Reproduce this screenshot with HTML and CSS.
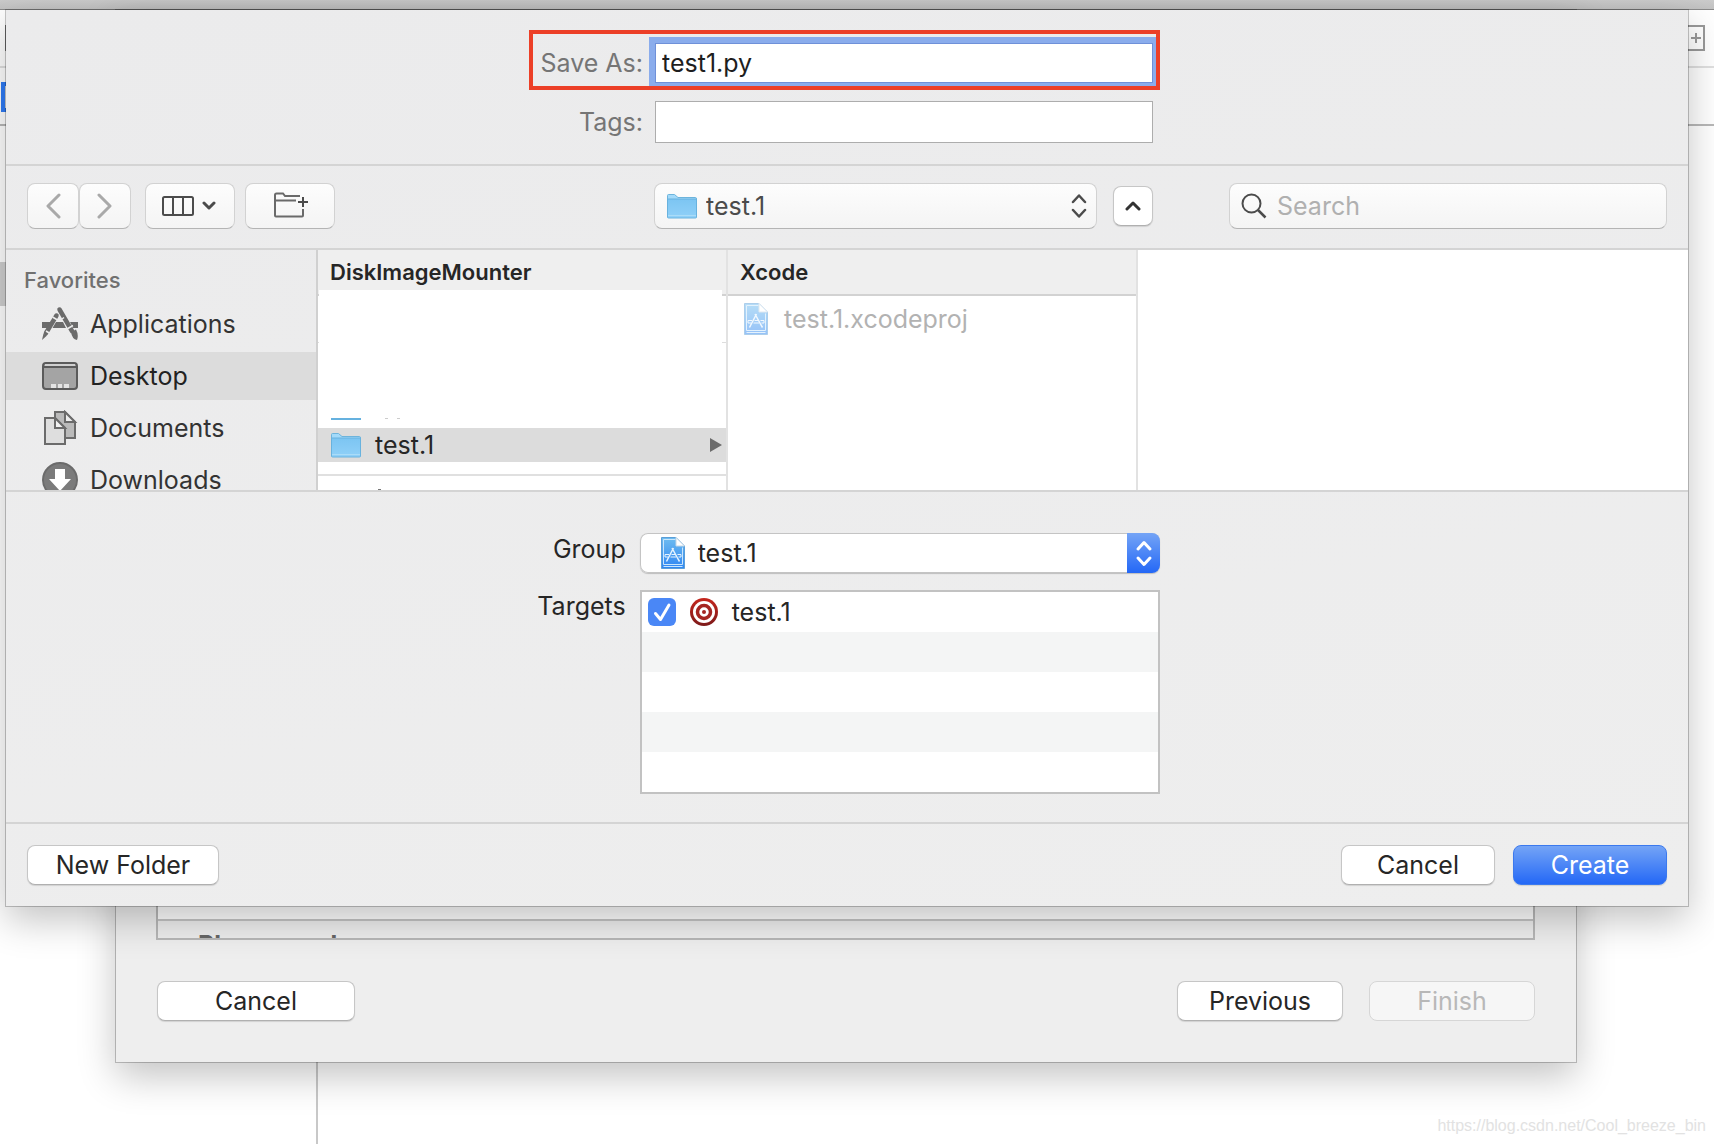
FILE: index.html
```html
<!DOCTYPE html>
<html lang="en">
<head>
<meta charset="utf-8">
<title>Save As</title>
<link rel="stylesheet" href="styles.css">
</head>
<body>
<svg class="defs" width="0" height="0" aria-hidden="true">
  <defs>
    <linearGradient id="folderFill" x1="0" y1="0" x2="0" y2="1"><stop offset="0" stop-color="#7cc5f2"/><stop offset="1" stop-color="#90d0f8"/></linearGradient>
    <linearGradient id="docFill" x1="0" y1="0" x2="0" y2="1"><stop offset="0" stop-color="#6fbdf0"/><stop offset="1" stop-color="#2f86f2"/></linearGradient>
    <linearGradient id="ringFill" x1="0" y1="0" x2="0" y2="1"><stop offset="0" stop-color="#c5261d"/><stop offset="1" stop-color="#7d1a1a"/></linearGradient>
    <symbol id="folder" viewBox="0 0 30 25">
      <path d="M.5 23V1.500Q.5.500 1.500.500H7.500L11 3.500H28.500Q29.500 3.500 29.500 5V23Z" fill="#a3dafa" stroke="#6db4dc"/>
      <path d="M.5 5H29.500V23Q29.500 24 28.500 24H1.500Q.5 24 .5 23Z" fill="url(#folderFill)" stroke="#68b2de"/>
      <path d="M1 21.500H29" stroke="#aadcf8"/>
    </symbol>
    <symbol id="project" viewBox="0 0 24 32">
      <path d="M.5.500H15L23.500 9V31.500H.5Z" fill="url(#docFill)" stroke="#5b9fd8"/>
      <path d="M2.500 2.500H14.500M2.500 2.500V27.500H21.500V10.500M2.500 29.500H21.500" fill="none" stroke="#c9e6fc"/>
      <path d="M15 .5V9H23.500Z" fill="#fff" stroke="#c4d6e4"/>
      <path d="M12.500 11 6.500 22.500 5.500 24.500M11 11 17 22 18.500 24.500" fill="none" stroke="#e4f3ff" stroke-width="1.500"/>
      <path d="M4 17.500H8M10.500 17.500H14M16.500 17.500H20V20H17.500M4 17.500V20H7M9.500 20H15" fill="none" stroke="#e4f3ff"/>
    </symbol>
  </defs>
</svg>

<div class="editor" aria-hidden="true">
  <div class="editor-title"></div>
  <div class="editor-tabs"><span class="split-edge"></span>
    <svg width="26" height="26" viewBox="0 0 26 26"><path d="M1 1H25V25H1ZM12 13H22M17 8V18" fill="none" stroke="#999" stroke-width="2"/></svg>
  </div>
  <div class="editor-path"><span class="file-chip"></span></div>
  <div class="editor-body"><div class="navigator"><div class="navigator-row"></div></div></div>
</div>

<section class="wizard" aria-label="New file">
  <div class="template-list"><div class="template-area"></div><div class="template-section">Playground</div></div>
  <div class="wizard-actions">
    <button class="btn btn-wide" type="button">Cancel</button>
    <button class="btn btn-prev" type="button">Previous</button>
    <button class="btn btn-prev" type="button" disabled>Finish</button>
  </div>
</section>

<form class="sheet" aria-label="Save">
  <div class="names">
    <div class="name-row highlighted"><label for="name">Save As:</label><input id="name" class="field focused" type="text" value="test1.py"></div>
    <div class="name-row"><label for="tags">Tags:</label><input id="tags" class="field" type="text"></div>
  </div>

  <div class="toolbar">
    <div class="tools">
      <button class="tool nav-btn" type="button" aria-label="Back"><svg width="16" height="26" viewBox="0 0 16 26"><path d="M14 2 3 13 14 24" fill="none" stroke="#a9a9a9" stroke-width="3" stroke-linecap="round" stroke-linejoin="round"/></svg></button>
      <button class="tool nav-btn" type="button" aria-label="Forward"><svg width="16" height="26" viewBox="0 0 16 26"><path d="M2 2 13 13 2 24" fill="none" stroke="#a9a9a9" stroke-width="3" stroke-linecap="round" stroke-linejoin="round"/></svg></button>
      <button class="tool view-btn" type="button" aria-label="View as columns">
        <svg width="32" height="20" viewBox="0 0 32 20"><rect x="1" y="1" width="30" height="18" rx="1.500" fill="none" stroke="#4b4b4b" stroke-width="2"/><path d="M11 1V19M21 1V19" stroke="#4b4b4b" stroke-width="2"/></svg>
        <svg width="14" height="10" viewBox="0 0 14 10"><path d="M2 2 7 7 12 2" fill="none" stroke="#4b4b4b" stroke-width="3" stroke-linecap="round" stroke-linejoin="round"/></svg>
      </button>
      <button class="tool group-btn" type="button" aria-label="New group"><svg width="36" height="28" viewBox="0 0 36 28"><path d="M28 5H13L11 2.500H4.500Q3 2.500 3 4V24.500Q3 25.500 4 25.500H30Q31 25.500 31 24.500V18M3 9.500H24" fill="none" stroke="#6a6a6a" stroke-width="2"/><path d="M31 6V16M26 11H36" stroke="#4b4b4b" stroke-width="2"/></svg></button>
    </div>
    <div class="place">
      <div class="popup tool">
        <svg class="popup-folder" width="30" height="25"><use href="#folder"/></svg>
        <select aria-label="Location"><option>test.1</option></select>
        <svg width="16" height="24" viewBox="0 0 16 24"><path d="M2 8 8 1.500 14 8M2 16 8 22.500 14 16" fill="none" stroke="#4b4b4b" stroke-width="2.500" stroke-linecap="round" stroke-linejoin="round"/></svg>
      </div>
      <button class="btn up-btn" type="button" aria-label="Collapse"><svg width="16" height="10" viewBox="0 0 16 10"><path d="M2 8 8 2 14 8" fill="none" stroke="#333" stroke-width="3" stroke-linecap="round" stroke-linejoin="round"/></svg></button>
    </div>
    <div class="search tool">
      <svg width="26" height="26" viewBox="0 0 26 26"><circle cx="10.500" cy="10.500" r="9" fill="none" stroke="#4b4b4b" stroke-width="2"/><path d="M17 17 24.500 24.500" stroke="#4b4b4b" stroke-width="2.500"/></svg>
      <input type="search" aria-label="Search" placeholder="Search">
    </div>
  </div>

  <div class="browser">
    <nav class="sidebar">
      <h2>Favorites</h2>
      <a href="#applications"><svg width="36" height="36" viewBox="0 0 36 36"><path d="M0 16H9L6 22H0ZM14 16H21L24 22H10.500ZM28 16H36V22H31Z" fill="#6b6b6b"/><path d="M17.500 3.500 30 25" stroke="#6b6b6b" stroke-width="4.500" stroke-linecap="round"/><path d="M14.500 9.500 4 27" stroke="#6b6b6b" stroke-width="4.500" stroke-linecap="round"/><path d="M10.500 11 15.500 14M25 23 31 19.500M4 25 8 27.500M20 13 22 11.500" stroke="#ebebeb" stroke-width="1.500"/><path d="M1.500 27.500 5 29.500 0 34ZM29 26 34 23.500Q37 29 35 34Q30 33 29 26Z" fill="#6b6b6b"/></svg>Applications</a>
      <a href="#desktop" class="current"><svg width="36" height="36" viewBox="0 0 36 36"><rect x="1" y="5" width="34" height="26" rx="3" fill="#a4a4a4" stroke="#5b5b5b" stroke-width="2"/><path d="M3 6H33V8H3Z" fill="#d0d0d0"/><path d="M1 9H35" stroke="#5b5b5b" stroke-width="2"/><path d="M9 26H14V30H9ZM16 26H20V30H16ZM22 26H27V30H22Z" fill="#e4e4e4"/></svg>Desktop</a>
      <a href="#documents"><svg width="36" height="36" viewBox="0 0 36 36"><path d="M13 2H23L33 12V28H13Z" fill="#bababa" stroke="#6b6b6b" stroke-width="2"/><path d="M23 2V12H33Z" fill="#ededed" stroke="#6b6b6b" stroke-width="2"/><path d="M3 8H13L23 18V34H3Z" fill="#dedede" stroke="#6b6b6b" stroke-width="2"/><path d="M13 8V18H23Z" fill="#f2f2f2" stroke="#6b6b6b" stroke-width="2"/></svg>Documents</a>
      <a href="#downloads"><svg width="36" height="36" viewBox="0 0 36 36"><circle cx="18" cy="18" r="17" fill="#7b7b7b" stroke="#6b6b6b" stroke-width="2"/><path d="M13 7H23V17H29L18 29 7 17H13Z" fill="#fff"/></svg>Downloads</a>
    </nav>
    <div class="column">
      <h3>DiskImageMounter</h3>
      <div class="column-rule"></div>
      <div class="blank"></div>
      <div class="row-sliver"><svg width="74" height="2" viewBox="0 0 74 2"><path d="M0 0H30V2H0Z" fill="#65b1df"/><path d="M54 0H57V1H54ZM66 0H69V1H66Z" fill="#ccc"/></svg></div>
      <div class="entry selected"><svg width="30" height="25"><use href="#folder"/></svg><span>test.1</span><svg class="more" width="14" height="16" viewBox="0 0 14 16"><path d="M1 1 13 8 1 15Z" fill="#6b6b6b"/></svg></div>
      <div class="entry-rule"></div>
      <div class="next-sliver"><svg width="3" height="1" viewBox="0 0 3 1"><path d="M0 0H3V1H0Z" fill="#777"/></svg></div>
    </div>
    <div class="column">
      <h3>Xcode</h3>
      <div class="entry dimmed"><svg width="24" height="32"><use href="#project"/></svg><span>test.1.xcodeproj</span></div>
    </div>
    <div class="preview"></div>
  </div>

  <div class="options">
    <label for="group">Group</label>
    <div class="combo">
      <svg width="24" height="32"><use href="#project"/></svg>
      <select id="group"><option>test.1</option></select>
      <svg class="stepper" width="33" height="40" viewBox="0 0 33 40"><path d="M11 16 17 9.500 23 16M11 25 17 31.500 23 25" fill="none" stroke="#fff" stroke-width="3" stroke-linecap="round" stroke-linejoin="round"/></svg>
    </div>
    <span class="options-label" id="targets">Targets</span>
    <ul class="targets" aria-labelledby="targets">
      <li><label>
        <span class="check"><input type="checkbox" checked><svg width="28" height="28" viewBox="0 0 28 28"><path d="M7.500 15.500 12.500 21.500 21 7" fill="none" stroke="#fff" stroke-width="3" stroke-linecap="round" stroke-linejoin="round"/></svg></span>
        <svg width="28" height="28" viewBox="0 0 28 28"><circle cx="14" cy="14" r="14" fill="url(#ringFill)"/><circle cx="14" cy="14" r="11" fill="#fff"/><circle cx="14" cy="14" r="6.500" fill="#fff" stroke="#a52522" stroke-width="3.500"/><circle cx="14" cy="14" r="2" fill="#a52522"/></svg>
        test.1</label></li>
      <li></li><li></li><li></li><li></li>
    </ul>
  </div>

  <div class="actions">
    <button class="btn btn-folder" type="button">New Folder</button>
    <button class="btn btn-action" type="button">Cancel</button>
    <button class="btn btn-action primary" type="submit">Create</button>
  </div>
</form>

<div class="watermark">https://blog.csdn.net/Cool_breeze_bin</div>
</body>
</html>
```
FILE: styles.css
```css
* { box-sizing: border-box; }

body {
  margin: 0;
  min-height: 100vh;
  display: grid;
  overflow-x: hidden;
  background: #fff;
  color: #262626;
  font: 25px/32px Inter, "Liberation Sans", sans-serif;
}

body > * { grid-area: 1 / 1; }

.defs { position: absolute; }

svg { display: block; flex: none; }

button, input, select { font: inherit; color: inherit; }

/* Editor window behind the sheets */
.editor { display: flex; flex-direction: column; }
.editor-title { height: 10px; background: linear-gradient(#cbcbcb, #c2c2c2); border-bottom: 1px solid #8a8a8a; }
.editor-tabs { height: 58px; padding: 15px 9px 15px 5px; display: flex; justify-content: space-between; border-bottom: 2px solid #e0e0e0; }
.split-edge { width: 1px; height: 26px; background: #777; }
.editor-path { height: 58px; padding: 14px 1px; border-bottom: 2px solid #b8b8b8; }
.file-chip { display: block; width: 22px; height: 30px; border: 4px solid #2f7cf6; }
.editor-body { flex: 1; display: flex; }
.navigator { width: 318px; padding-top: 136px; border-right: 2px solid #c8c8c8; }
.navigator-row { height: 44px; background: #d0d0d0; }

/* Sheets */
.wizard, .sheet {
  align-self: start;
  background: #eee;
  box-shadow: 0 0 0 1px rgba(0, 0, 0, .22), 0 14px 36px rgba(0, 0, 0, .24);
}

.wizard { margin: 10px 138px 0 116px; padding: 40px 41px 41px; }
.template-list { height: 890px; margin-left: -1px; border: 2px solid #b8b8b8; overflow: hidden; }
.template-area { height: 869px; background: #fff; border-bottom: 2px solid #c4c4c4; }
.template-section { padding: 8px 40px; font-weight: 700; color: #666; }
.wizard-actions { display: flex; gap: 26px; margin-top: 41px; }

.sheet {
  margin: 10px 26px 0 6px;
  background: linear-gradient(170deg, #ebebec, #eee);
}

.btn {
  height: 40px;
  padding: 0;
  border: 1px solid #c6c6c6;
  border-bottom-color: #b0b0b0;
  border-radius: 8px;
  background: #fff;
  box-shadow: 0 1px 1px rgba(0, 0, 0, .12);
  line-height: 36px;
}
.btn:disabled { background: #f6f6f6; color: #b8b8b8; border-color: #d6d6d6; box-shadow: none; }
.btn-wide { width: 198px; margin-right: auto; }
.btn-prev { width: 166px; }

/* Name fields */
.names {
  display: flex;
  flex-direction: column;
  align-items: center;
  gap: 11px;
  padding: 20px 5px 21px 0;
  border-bottom: 2px solid #d4d4d4;
}
.name-row {
  display: grid;
  grid-template-columns: 1fr 498px;
  column-gap: 12px;
  align-items: center;
  width: 631px;
  padding-right: 7px;
  color: #757575;
}
.name-row label { text-align: right; }
.highlighted { height: 60px; padding: 9px 3px 3px 0; border: 4px solid #ec3f27; overflow: hidden; }
.field {
  width: 100%;
  height: 42px;
  padding: 0 6px;
  border: 1px solid #adadad;
  border-radius: 0;
  outline: 0;
  background: #fff;
  color: #1e1e1e;
}
.focused { height: 40px; border-color: #6f90d8; box-shadow: 0 0 0 6px #8aacec; }

/* Toolbar */
.toolbar {
  display: grid;
  grid-template-columns: minmax(0, 627fr) 499px minmax(0, 514fr);
  padding: 17px 21px 19px;
  border-bottom: 2px solid #d4d4d4;
}
.tools { display: flex; }
.tool {
  height: 46px;
  display: flex;
  align-items: center;
  justify-content: center;
  padding: 0;
  border: 1px solid #d2d2d2;
  border-bottom-color: #b4b4b4;
  border-radius: 8px;
  background: linear-gradient(#fdfdfd, #f4f4f4);
}
.nav-btn { width: 52px; }
.view-btn { width: 90px; margin: 0 10px 0 14px; gap: 8px; padding-right: 2px; }
.group-btn { width: 90px; padding-bottom: 3px; }
.place { display: flex; justify-content: space-between; align-items: center; }
.popup { width: 443px; padding: 0 9px 0 12px; gap: 9px; color: #4b4b4b; }
.up-btn { width: 40px; display: flex; align-items: center; justify-content: center; }
select { flex: 1; min-width: 0; appearance: none; border: 0; padding: 0; background: none; outline: 0; }
.search { margin-left: 76px; padding: 0 11px; gap: 10px; }
.search input { flex: 1; min-width: 0; padding: 0; border: 0; outline: 0; background: none; appearance: none; }
.search input::placeholder { color: #b0b0b0; }

/* File browser */
.browser {
  display: grid;
  grid-template-columns: 312px 410px 410px 1fr;
  height: 242px;
  border-bottom: 2px solid #d4d4d4;
  overflow: hidden;
}
.sidebar { height: 240px; overflow: hidden; padding-top: 14px; border-right: 2px solid #d0d0d0; }
.sidebar h2 { margin: 0; padding: 0 18px 4px; font-size: 22px; line-height: 32px; font-weight: 500; color: #707070; }
.sidebar a {
  display: flex;
  align-items: center;
  gap: 12px;
  height: 48px;
  margin-bottom: 4px;
  padding-left: 36px;
  line-height: 34px;
  color: #333;
  text-decoration: none;
}
.sidebar .current { background: #dcdcdc; color: #222; }
.column { border-right: 2px solid #e2e2e2; background: #fff; }
.column h3 {
  margin: 0;
  height: 46px;
  padding: 0 12px;
  border-bottom: 2px solid #d2d2d2;
  background: #efefef;
  font-size: 22px;
  line-height: 44px;
  font-weight: 600;
}
.column-rule { height: 47px; border-bottom: 1px solid #ddd; }
.blank { position: relative; height: 128px; margin: -53px 4px 0 1px; background: #fff; }
.row-sliver { height: 10px; padding-left: 13px; }
.entry { display: flex; align-items: center; gap: 14px; height: 34px; padding: 0 3px 0 13px; }
.selected { background: #dcdcdc; }
.more { margin-left: auto; }
.entry-rule { height: 14px; border-bottom: 2px solid #e0e0e0; }
.next-sliver { padding: 13px 0 0 60px; }
.dimmed { height: 46px; padding-left: 16px; gap: 16px; color: #b2b2b2; }
.dimmed svg { opacity: .5; }
.preview { background: #fff; }

/* Accessory options */
.options {
  display: grid;
  grid-template-columns: auto 520px;
  justify-content: center;
  align-items: start;
  gap: 17px 14px;
  padding: 41px 0 28px 3px;
  border-bottom: 2px solid #d4d4d4;
}
.options > label, .options-label { text-align: right; }
.combo {
  display: flex;
  align-items: center;
  gap: 13px;
  height: 40px;
  padding-left: 21px;
  border-radius: 8px;
  background: #fff;
  box-shadow: inset 0 0 0 1px #c4c4c4, 0 1px 1px rgba(0, 0, 0, .2);
}
.stepper { border-radius: 0 8px 8px 0; background: linear-gradient(#74a4f6, #2468f6); }
.targets { margin: 0; padding: 0; list-style: none; border: 2px solid #c2c2c2; background: #fff; }
.targets li { height: 40px; }
.targets li:nth-child(even) { background: #f4f5f5; }
.targets label { display: flex; align-items: center; gap: 14px; height: 40px; padding-left: 6px; }
.check { display: grid; }
.check > * { grid-area: 1 / 1; pointer-events: none; }
.check input { appearance: none; width: 28px; height: 28px; margin: 0; border-radius: 6px; background: #4a87f6; }

.actions { display: flex; gap: 18px; padding: 21px; }
.btn-folder { width: 192px; margin-right: auto; }
.btn-action { width: 154px; }
.primary { border-color: #3b79ee; background: linear-gradient(#74a4f6, #2468f6); color: #fff; }

.watermark {
  align-self: end;
  justify-self: end;
  margin: 0 8px 8px;
  font: 16px/20px "Liberation Sans", sans-serif;
  color: #e2e2e2;
}
```
